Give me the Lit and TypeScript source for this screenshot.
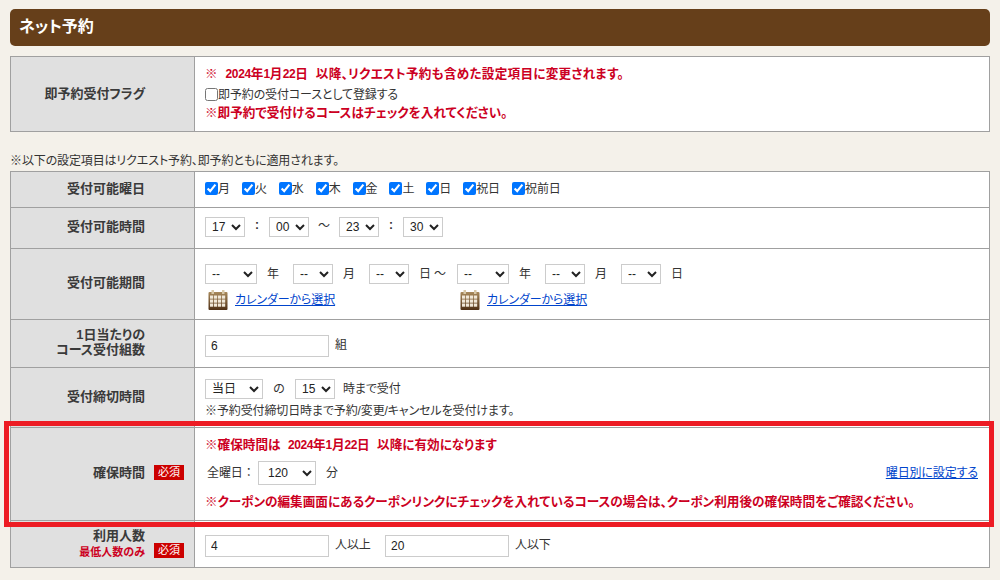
import { LitElement, html, svg, css } from "lit";
import { customElement } from "lit/decorators.js";

const calendar = html`<svg class="cal" width="20" height="20" viewBox="0 0 20 20">
  <defs><linearGradient id="g" x1="0" y1="0" x2="0" y2="1"><stop offset="0" stop-color="#a98a5c"/><stop offset="1" stop-color="#4f3015"/></linearGradient></defs>
  <rect x="0.5" y="2" width="19" height="18" rx="1" fill="url(#g)"/>
  <rect x="3.5" y="0" width="2.5" height="4" fill="#d8c8a8"/><rect x="14" y="0" width="2.5" height="4" fill="#d8c8a8"/>
  ${[5.5, 9.5, 13.5].map((y) => [2, 6, 10, 14].map((x) => svg`<rect x=${x} y=${y} width="3.2" height="3.2" fill="#f1e8d8"/>`))}
</svg>`;

const n = (s: string) => html`<span class="n">${s}</span>`;

@customElement("app-root")
export class AppRoot extends LitElement {
  static styles = css`
    :host { display: block; height: 580px; overflow: hidden; box-sizing: border-box; padding: 9px 10px 0; position: relative;
      background: #f4f1ea; color: #333; font: 12px/16px "Liberation Sans", "Noto Sans CJK JP", sans-serif; font-feature-settings: "palt"; letter-spacing: -0.12px; }
    * { box-sizing: border-box; }
    .head { height: 37px; border-radius: 5px; background: #663f1a; color: #fff; font-size: 16px; font-weight: 700; line-height: 35px; padding-left: 9px; letter-spacing: 0; }
    .tbl { background: #fff; border: 1px solid #a0a0a0; border-bottom: 0; }
    .first { margin-top: 10px; }
    .note { margin-top: 21px; height: 18px; line-height: 17px; }
    .row { display: grid; grid-template-columns: 184px 1fr; border-bottom: 1px solid #a0a0a0; }
    .lab { background: #e0e0e0; border-right: 1px solid #a0a0a0; display: grid; grid-template-columns: 1fr 30px; column-gap: 9px; padding: 0 10px 3px 0; align-items: center; text-align: right; font-size: 13px; font-weight: 700; line-height: 15px; color: #3a3a3a; letter-spacing: 0; }
    .cell { padding: 0 11px 2px 10px; min-width: 0; }
    .h1 { height: 75px; } .h2 { height: 36px; } .h3 { height: 41px; } .h4 { height: 71px; } .h5 { height: 48px; } .h6 { height: 60px; } .h7 { height: 93px; } .h8 { height: 47px; }
    .h1 .lab { padding-bottom: 1px; }
    .p6 { padding-top: 6px; padding-bottom: 0; }
    .p4 { padding-top: 4px; padding-bottom: 0; }
    .p2 { padding-top: 2px; padding-bottom: 0; }
    .p0 { padding-bottom: 0; }
    .red { color: #cc0022; font-weight: 700; font-size: 12.6px; letter-spacing: 0; }
    .n { font-size: 12px; letter-spacing: -0.4px; }
    .wide { word-spacing: 4px; }
    .long { letter-spacing: 0.03px; }
    .mid { display: flex; align-items: center; }
    .stack { display: flex; flex-direction: column; justify-content: center; }
    .days { gap: 12px; }
    .chk { display: flex; align-items: center; }
    input[type="checkbox"] { margin: 0; width: 13px; height: 13px; }
    select { height: 20px; width: 40px; font: 12px "Liberation Sans", "Noto Sans CJK JP", sans-serif; color: #222; background: #fff; border: 1px solid #ccc; border-radius: 0; padding: 0 0 0 2px; margin: 0; }
    input[type="text"] { width: 124px; height: 22px; border: 1px solid #ccc; padding: 0 5px; margin: 0; font: 12px "Liberation Sans", "Noto Sans CJK JP", sans-serif; color: #222; outline: none; }
    .w52 { width: 52px; } .w58 { width: 58px; }
    .tall { height: 24px; padding-left: 5px; }
    .sep { width: 24px; text-align: center; font-weight: 700; padding-bottom: 4px; }
    .til { width: 30px; text-align: center; padding-bottom: 3px; }
    .dategroup { display: flex; align-items: center; height: 20px; }
    .dategroup span { width: 36px; text-align: left; padding-left: 10px; }
    .calrow { display: flex; margin-top: 6px; height: 20px; }
    .calitem { width: 252px; display: flex; align-items: center; padding-left: 3px; gap: 7px; }
    .cal { display: block; }
    a { color: #0044cc; text-decoration: underline; }
    .badge { width: 30px; height: 15px; background: #c00; color: #fff; font-size: 11px; line-height: 15px; text-align: center; font-weight: 400; display: block; }
    .unit { margin: 0 6px; padding-bottom: 2px; }
    .frame { position: absolute; left: 4px; top: 421px; width: 990px; height: 106px; border: 5px solid #ed1c24; pointer-events: none; }
    .sub { font-size: 11px; line-height: 15px; margin-top: 2px; }
    .labdown { padding-top: 2px; }
    .badge8 { margin-top: 15px; }
    .d1, .d3 { line-height: 21px; }
    .d1 { margin-top: -1px; letter-spacing: 0.25px; }
    .chkline { height: 18px; margin-top: 1px; }
    .d3 { margin-top: -1px; }
    .of { width: 32px; text-align: center; }
    .until { margin-left: 8px; }
    .tail { margin-top: 4px; }
    .allday { margin: 8px 0 9px; justify-content: space-between; }
    .alllab { width: 53px; padding-left: 2px; font-feature-settings: normal; white-space: nowrap; }
    .min { margin-left: 10px; }
    .nd { width: 48px !important; }
    .more { width: 44px; }
  `;

  private dayCheck(d: string) {
    return html`<label class="chk"><input type="checkbox" checked /><span>${d}</span></label>`;
  }

  private sel(v: string, cls = "") {
    return html`<select class=${cls}><option>${v}</option></select>`;
  }

  render() {
    return html`
      <div class="head">ネット予約</div>
      <div class="tbl first">
        <div class="row h1">
          <div class="lab"><div>即予約受付フラグ</div><div></div></div>
          <div class="cell stack p0">
            <div class="red d1 wide">※ ${n("2024")}年${n("1")}月${n("22")}日 以降、リクエスト予約も含めた設定項目に変更されます。</div>
            <label class="chk chkline"><input type="checkbox" /><span>即予約の受付コースとして登録する</span></label>
            <div class="red d3">※即予約で受付けるコースはチェックを入れてください。</div>
          </div>
        </div>
      </div>
      <div class="note">※以下の設定項目はリクエスト予約、即予約ともに適用されます。</div>
      <div class="tbl">
        <div class="row h2">
          <div class="lab"><div>受付可能曜日</div><div></div></div>
          <div class="cell mid days">${["月", "火", "水", "木", "金", "土", "日", "祝日", "祝前日"].map((d) => this.dayCheck(d))}</div>
        </div>
        <div class="row h3">
          <div class="lab"><div>受付可能時間</div><div></div></div>
          <div class="cell mid">
            ${this.sel("17")}<span class="sep">:</span>${this.sel("00")}<span class="til">〜</span>${this.sel("23")}<span class="sep">:</span>${this.sel("30")}
          </div>
        </div>
        <div class="row h4">
          <div class="lab"><div>受付可能期間</div><div></div></div>
          <div class="cell stack p6">
            <div class="dategroup">
              ${this.sel("--", "w52")}<span>年</span>${this.sel("--")}<span>月</span>${this.sel("--")}<span class="nd">日 〜</span>${this.sel("--", "w52")}<span>年</span>${this.sel("--")}<span>月</span>${this.sel("--")}<span>日</span>
            </div>
            <div class="calrow">
              <div class="calitem">${calendar}<a href="#">カレンダーから選択</a></div>
              <div class="calitem">${calendar}<a href="#">カレンダーから選択</a></div>
            </div>
          </div>
        </div>
        <div class="row h5">
          <div class="lab"><div>1日当たりの<br />コース受付組数</div><div></div></div>
          <div class="cell mid p4"><input type="text" value="6" /><span class="unit">組</span></div>
        </div>
        <div class="row h6">
          <div class="lab"><div>受付締切時間</div><div></div></div>
          <div class="cell stack p2">
            <div class="mid">
              ${this.sel("当日", "w58")}<span class="of">の</span>${this.sel("15")}<span class="until">時まで受付</span>
            </div>
            <div class="tail">※予約受付締切日時まで予約/変更/キャンセルを受付けます。</div>
          </div>
        </div>
        <div class="row h7">
          <div class="lab"><div>確保時間</div><span class="badge">必須</span></div>
          <div class="cell stack">
            <div class="red wide">※確保時間は ${n("2024")}年${n("1")}月${n("22")}日 以降に有効になります</div>
            <div class="mid allday">
              <div class="mid">
                <span class="alllab">全曜日：</span>${this.sel("120", "w58 tall")}<span class="min">分</span>
              </div>
              <a href="#">曜日別に設定する</a>
            </div>
            <div class="red long">※クーポンの編集画面にあるクーポンリンクにチェックを入れているコースの場合は、クーポン利用後の確保時間をご確認ください。</div>
          </div>
        </div>
        <div class="row h8">
          <div class="lab"><div class="labdown"><div>利用人数</div><div class="red sub">最低人数のみ</div></div><span class="badge badge8">必須</span></div>
          <div class="cell mid p4">
            <input type="text" value="4" /><span class="unit more">人以上</span><input type="text" value="20" /><span class="unit">人以下</span>
          </div>
        </div>
      </div>
      <div class="frame"></div>
    `;
  }
}
